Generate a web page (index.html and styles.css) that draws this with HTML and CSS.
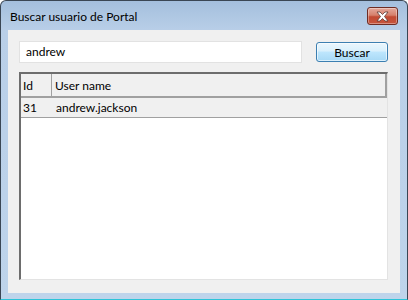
FILE: index.html
```html
<!DOCTYPE html>
<html>
<head>
<meta charset="utf-8">
<link rel="stylesheet" href="styles.css">
</head>
<body>
<div class="window">
  <div class="titlebar">
    <span class="title">Buscar usuario de Portal</span>
    <div class="close">
      <svg width="15" height="11" viewBox="0 0 15 11">
        <path d="M2 1 L5 1 L7.5 3.5 L10 1 L13 1 L9.5 5.5 L13 10 L10 10 L7.5 7.5 L5 10 L2 10 L5.5 5.5 Z" fill="#fff" stroke="#5a3a36" stroke-width="0.8" stroke-linejoin="round"/>
      </svg>
    </div>
  </div>
  <div class="client">
    <div class="searchrow">
      <div class="input">andrew</div>
      <button class="btn">Buscar</button>
    </div>
    <div class="grid">
      <div class="ghead">
        <div class="col-id">Id</div>
        <div class="col-name">User name</div>
      </div>
      <div class="grow">
        <div class="col-id">31</div>
        <div class="col-name">andrew.jackson</div>
      </div>
      <div class="gbody"></div>
    </div>
  </div>
</div>
</body>
</html>
```

FILE: styles.css
```css
html, body {
  margin: 0;
  padding: 0;
  background: #ffffff;
}
body {
  font-family: "Lato", "Noto Sans", sans-serif;
  font-size: 12px;
  color: #000;
}
.window {
  width: 408px;
  height: 300px;
  box-sizing: border-box;
  border: 1px solid #3a4654;
  border-bottom-color: #2cc4d8;
  border-radius: 6px 6px 0 0;
  background: linear-gradient(to bottom, #a4bfdd 0px, #b9cfe8 30px, #bed4eb 100%);
  display: flex;
  flex-direction: column;
  padding: 0 7px 6px 7px;
}
.titlebar {
  height: 29px;
  display: flex;
  align-items: center;
  justify-content: space-between;
  padding-left: 2px;
}
.title {
  font-size: 12px;
  color: #000;
  margin-top: 1px;
}
.close {
  width: 29px;
  height: 16px;
  margin-right: 2px;
  margin-top: 1px;
  border: 1px solid #6e2c24;
  border-radius: 3px;
  background: linear-gradient(to bottom, #e3a99c 0%, #d6806c 45%, #c24a33 55%, #c6553d 100%);
  display: flex;
  align-items: center;
  justify-content: center;
  box-shadow: inset 0 0 0 1px rgba(255,255,255,0.35);
}
.client {
  flex: 1;
  background: #f0f0f0;
  padding: 11px 12px 13px 11px;
  display: flex;
  flex-direction: column;
  gap: 9px;
}
.searchrow {
  display: flex;
  align-items: center;
  gap: 14px;
}
.input {
  width: 283px;
  height: 22px;
  box-sizing: border-box;
  border: 1px solid #e2e2e2;
  background: #fff;
  padding: 0 6px;
  line-height: 20px;
}
.btn {
  width: 72px;
  height: 20px;
  box-sizing: border-box;
  border: 1px solid #3c7fb1;
  border-radius: 3px;
  background: linear-gradient(to bottom, #eaf6fd 0%, #d9f0fc 45%, #bee6fd 50%, #a7d9f5 100%);
  box-shadow: inset 0 0 0 1px rgba(255,255,255,0.6);
  font-family: "Lato", "Noto Sans", sans-serif;
  font-size: 12px;
  color: #000;
  padding: 0;
  line-height: 17px;
}
.grid {
  flex: 1;
  box-sizing: border-box;
  border-top: 2px solid #6d6d6d;
  border-left: 2px solid #6d6d6d;
  border-right: 1px solid #e3e3e3;
  border-bottom: 1px solid #e3e3e3;
  background: #fff;
  display: flex;
  flex-direction: column;
}
.ghead {
  height: 22px;
  display: flex;
  background: #f0f0f0;
  border-bottom: 2px solid #a0a0a0;
  border-right: 2px solid #a0a0a0;
}
.grow {
  height: 19px;
  display: flex;
  background: #f0f0f0;
  border-bottom: 1px solid #a0a0a0;
}
.col-id {
  width: 31px;
  box-sizing: border-box;
  padding-left: 2px;
  display: flex;
  align-items: center;
}
.ghead .col-id {
  border-right: 1px solid #a0a0a0;
}
.col-name {
  padding-left: 4px;
  display: flex;
  align-items: center;
}
.ghead .col-name {
  padding-left: 3px;
}
.gbody {
  flex: 1;
}
```
